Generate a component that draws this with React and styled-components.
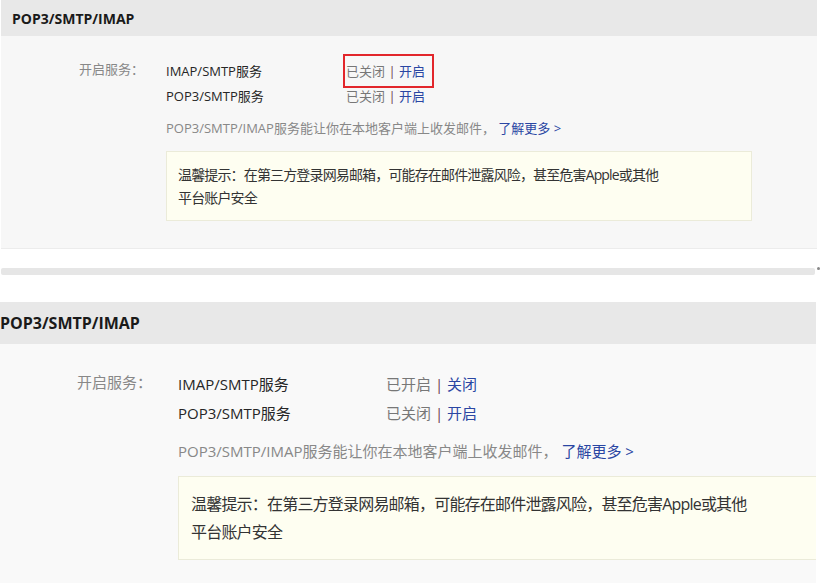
import React from "react";
import styled, { createGlobalStyle } from "styled-components";

const GlobalStyle = createGlobalStyle`
  body {
    margin: 0;
    background: #fff;
    font-family: "Open Sans", "Noto Sans CJK SC", sans-serif;
  }
`;

const small = {
  left: 1, fs: 13, titleFs: 14, headerH: 36, titlePad: 11, labelPad: 78, col: 165,
  nameW: 180, lh: 25, padTop: 23, descGap: 7, boxGap: 10, boxW: 586,
  boxFs: 14, boxTrack: -0.85, boxPadX: 11, boxPadY: 11, boxLh: 23, padBottom: 27,
  body: "#f7f7f7",
};

const large = {
  left: 0, fs: 15, titleFs: 16, headerH: 42, titlePad: 0, labelPad: 77, col: 178,
  nameW: 208, lh: 29, padTop: 26, descGap: 9, boxGap: 10, boxW: 700,
  boxFs: 16, boxTrack: -0.8, boxPadX: 12, boxPadY: 13, boxLh: 28, padBottom: 30,
  body: "#f9f9f9",
};

const Page = styled.div`
  width: 820px;
  height: 583px;
  overflow: hidden;
`;

const Panel = styled.section`
  width: 816px;
  margin-left: ${({ $s }) => $s.left}px;
  background: ${({ $s }) => $s.body};
  border-bottom: 1px solid #ececec;
  overflow: hidden;
`;

const Header = styled.div`
  height: ${({ $s }) => $s.headerH}px;
  display: flex;
  align-items: center;
  padding-left: ${({ $s }) => $s.titlePad}px;
  background: #e8e8e8;
  color: #1a1a1a;
  font-size: ${({ $s }) => $s.titleFs}px;
  font-weight: 700;
`;

const Body = styled.div`
  display: grid;
  grid-template-columns: ${({ $s }) => $s.col}px 1fr;
  padding: ${({ $s }) => $s.padTop}px 0 ${({ $s }) => $s.padBottom}px;
  font-size: ${({ $s }) => $s.fs}px;
`;

const Label = styled.div`
  padding-left: ${({ $s }) => $s.labelPad}px;
  line-height: ${({ $s }) => $s.lh - 4}px;
  color: #888;
`;

const Content = styled.div`
  display: flex;
  flex-direction: column;
`;

const ServiceRow = styled.div`
  display: grid;
  grid-template-columns: ${({ $s }) => $s.nameW}px auto;
  justify-content: start;
  line-height: ${({ $s }) => $s.lh}px;
`;

const Name = styled.span`
  color: #262626;
`;

const Status = styled.span`
  position: relative;
  color: #777;
  white-space: pre;
  ${({ $highlight }) =>
    $highlight &&
    `
    &::after {
      content: "";
      position: absolute;
      left: -3px;
      top: -5px;
      width: 91px;
      height: 34px;
      box-sizing: border-box;
      border: 2px solid #e2262b;
    }
  `}
`;

const Sep = styled.span`
  color: #6b3b52;
`;

const Action = styled.a`
  color: #2a46a3;
  text-decoration: none;
  cursor: pointer;
`;

const Desc = styled.div`
  margin-top: ${({ $s }) => $s.descGap}px;
  line-height: ${({ $s }) => $s.lh}px;
  color: #888;
  white-space: nowrap;
`;

const Tip = styled.div`
  box-sizing: border-box;
  width: ${({ $s }) => $s.boxW}px;
  margin-top: ${({ $s }) => $s.boxGap}px;
  padding: ${({ $s }) => $s.boxPadY}px ${({ $s }) => $s.boxPadX}px;
  background: #fefef1;
  border: 1px solid #ebebd9;
  color: #333;
  font-size: ${({ $s }) => $s.boxFs}px;
  letter-spacing: ${({ $s }) => $s.boxTrack}px;
  line-height: ${({ $s }) => $s.boxLh}px;
`;

const Divider = styled.div`
  display: flex;
  margin: 19px 0 27px 1px;
`;

const Bar = styled.div`
  width: 814px;
  height: 7px;
  border-radius: 2px;
  background: #e6e6e6;
`;

const Dot = styled.div`
  width: 3px;
  height: 3px;
  margin: -1px 0 0 2px;
  border-radius: 50%;
  background: #888;
`;

const services = [
  { name: "IMAP/SMTP服务" },
  { name: "POP3/SMTP服务" },
];

const ServiceStatus = ({ on, highlight }) => (
  <Status $highlight={highlight}>
    {on ? "已开启" : "已关闭"} <Sep>|</Sep> <Action>{on ? "关闭" : "开启"}</Action>
  </Status>
);

const MailPanel = ({ s, states, highlight }) => (
  <Panel $s={s}>
    <Header $s={s}>POP3/SMTP/IMAP</Header>
    <Body $s={s}>
      <Label $s={s}>开启服务：</Label>
      <Content>
        {services.map((svc, i) => (
          <ServiceRow $s={s} key={svc.name}>
            <Name>{svc.name}</Name>
            <ServiceStatus on={states[i]} highlight={highlight && i === 0} />
          </ServiceRow>
        ))}
        <Desc $s={s}>
          POP3/SMTP/IMAP服务能让你在本地客户端上收发邮件， <Action>了解更多 &gt;</Action>
        </Desc>
        <Tip $s={s}>
          温馨提示：在第三方登录网易邮箱，可能存在邮件泄露风险，甚至危害Apple或其他
          <br />
          平台账户安全
        </Tip>
      </Content>
    </Body>
  </Panel>
);

export default function App() {
  return (
    <Page>
      <GlobalStyle />
      <MailPanel s={small} states={[false, false]} highlight />
      <Divider>
        <Bar />
        <Dot />
      </Divider>
      <MailPanel s={large} states={[true, false]} />
    </Page>
  );
}
